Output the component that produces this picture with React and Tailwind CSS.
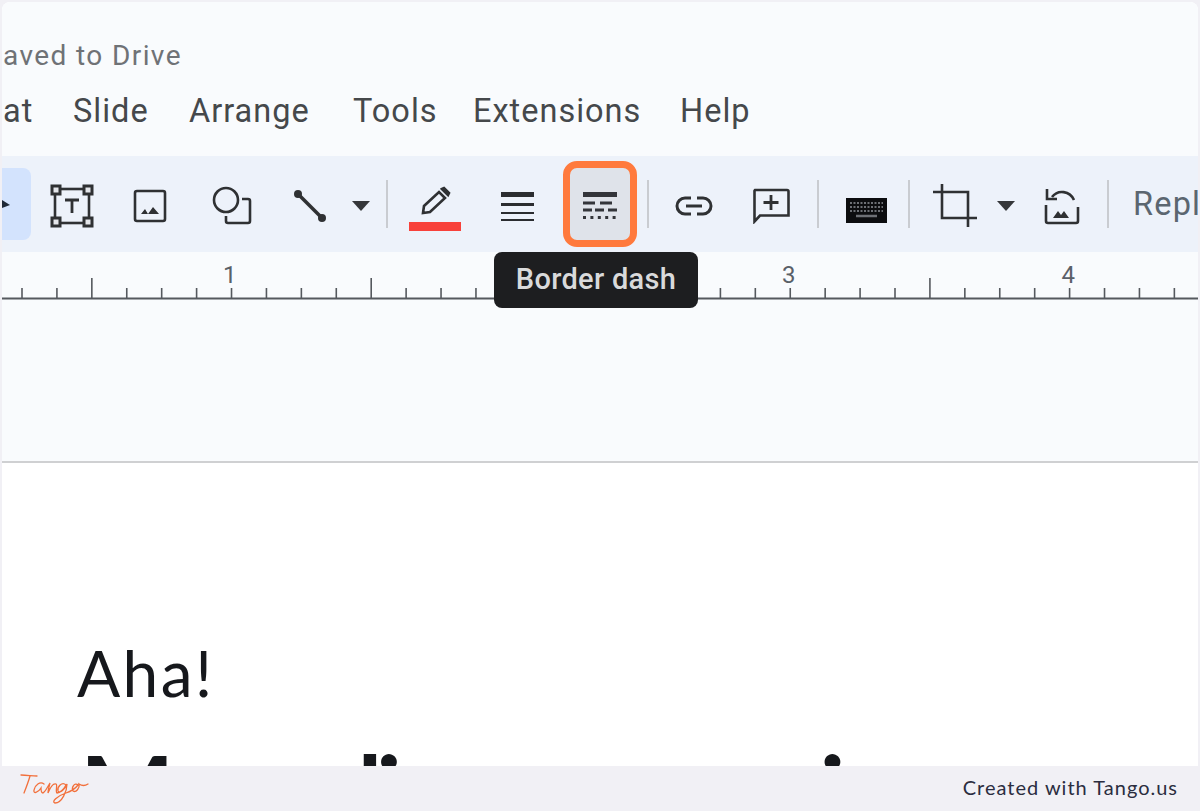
import React from "react";

const menu = [
    { label: "at", width: "w-[70px]" },
    { label: "Slide", width: "w-[116px]" },
    { label: "Arrange", width: "w-[164px]" },
    { label: "Tools", width: "w-[120px]" },
    { label: "Extensions", width: "w-[207px]" },
    { label: "Help", width: "w-auto" },
];

function Icon({ w, h, vb, children }) {
    return (
        <svg width={w} height={h} viewBox={vb} fill="none" stroke="#2f3133" strokeWidth="2.6">
            {children}
        </svg>
    );
}

function Sep({ width = "w-[10px]" }) {
    return (
        <div className={`${width} h-full flex items-center justify-center shrink-0`}>
            <div className="w-[2px] h-[48px] bg-[#c9ccd1]" />
        </div>
    );
}

function Slot({ width, pad = "pt-[4px]", className = "", children }) {
    return <div className={`${width} ${pad} h-full flex items-center shrink-0 ${className}`}>{children}</div>;
}

function Caret() {
    return (
        <svg width="18" height="10" viewBox="0 0 18 10">
            <path d="M0 0h18l-9 10z" fill="#35373a" />
        </svg>
    );
}

function RulerTicks() {
    const ticks = [];
    for (let i = 0; i < 34; i++) {
        const x = 20 + i * 34.92;
        const major = (i - 2) % 8 === 0;
        ticks.push(<line key={i} x1={x} x2={x} y1={major ? 26 : 36} y2={46} />);
    }
    return (
        <svg className="absolute left-0 top-0" width="1200" height="48" stroke="#55595e" strokeWidth="1.6">
            <line x1="0" x2="1198" y1="46.5" y2="46.5" strokeWidth="1.8" />
            {ticks}
        </svg>
    );
}

export default function App() {
    return (
        <div className="w-[1200px] h-[811px] flex flex-col overflow-hidden bg-[#f1f0f5] font-['Roboto',sans-serif]">
            <div className="flex-1 min-h-0 flex flex-col mx-[2px] mt-[2px] rounded-t-lg overflow-hidden bg-white relative">
                {/* Title and menu */}
                <div className="h-[154px] shrink-0 bg-[#f9fbfd]">
                    <div className="pt-[36px] pl-[1px] h-[87px] text-[28px] leading-[36px] tracking-[1.4px] text-[#6f7276]">aved to Drive</div>
                    <div className="flex pl-[1px] text-[32.5px] leading-[44px] tracking-[1px] text-[#45484b]">
                        {menu.map((m) => (
                            <div key={m.label} className={`${m.width} shrink-0`}>{m.label}</div>
                        ))}
                    </div>
                </div>

                {/* Toolbar */}
                <div className="h-[96px] shrink-0 bg-[#edf2fa] flex items-center overflow-hidden">
                    <div className="w-[29px] h-[72px] shrink-0 rounded-r-lg bg-[#d3e3fd] flex items-center">
                        <svg width="8" height="8" viewBox="0 0 8 8"><path d="M0 0l8 5-8 3z" fill="#1f2937" /></svg>
                    </div>
                    <Slot width="w-[82px]" className="justify-center">
                        <Icon w={44} h={44} vb="0 0 44 44">
                            <rect x="5" y="5" width="34" height="34" />
                            <g fill="#e4e6ea" strokeWidth="3">
                                <rect x="2" y="2" width="8" height="8" />
                                <rect x="34" y="2" width="8" height="8" />
                                <rect x="2" y="34" width="8" height="8" />
                                <rect x="34" y="34" width="8" height="8" />
                            </g>
                            <path d="M15 16h14M22 16v13" strokeWidth="2.8" />
                        </Icon>
                    </Slot>
                    <Slot width="w-[74px]" className="justify-center">
                        <Icon w={34} h={34} vb="0 0 34 34">
                            <rect x="2" y="2" width="30" height="30" rx="2" />
                            <path d="M8 25l4-5 3 5zM15 25l5-7 6 7z" fill="#2f3133" stroke="none" />
                        </Icon>
                    </Slot>
                    <Slot width="w-[90px]" className="justify-center">
                        <Icon w={40} h={40} vb="0 0 40 40">
                            <circle cx="14" cy="14" r="12" />
                            <path d="M30 13h6a2 2 0 0 1 2 2v20a2 2 0 0 1-2 2H16a2 2 0 0 1-2-2v-5" />
                        </Icon>
                    </Slot>
                    <Slot width="w-[66px]" className="justify-center">
                        <Icon w={34} h={34} vb="0 0 34 34">
                            <path d="M5 5l24 24" strokeWidth="3.6" />
                            <circle cx="5" cy="5" r="4" fill="#2f3133" stroke="none" />
                            <circle cx="29" cy="29" r="4" fill="#2f3133" stroke="none" />
                        </Icon>
                    </Slot>
                    <Slot width="w-[36px]" className="justify-center"><Caret /></Slot>
                    <Sep width="w-[16px]" />
                    <Slot width="w-[80px]" pad="pt-[9px]" className="flex-col justify-center">
                        <svg width="32" height="30" viewBox="0 0 32 30" fill="none" stroke="#2f3133" strokeWidth="2.6">
                            <path d="M4 27l1-7L20 6l6 6-15 14z" />
                            <path d="M23 3l2-1 5 5-1 2z" fill="#2f3133" />
                        </svg>
                        <div className="w-[52px] h-[9px] mt-[6px] bg-[#f8413a]" />
                    </Slot>
                    <Slot width="w-[84px]" className="flex-col justify-center gap-[7px] pl-[1px]">
                        <div className="w-[33px] h-[5px] bg-[#2b2d30]" />
                        <div className="w-[33px] h-[3px] bg-[#2b2d30] -mt-[1px]" />
                        <div className="w-[33px] h-[2px] bg-[#2b2d30] -mt-[1px]" />
                        <div className="w-[33px] h-[2px] bg-[#2b2d30] -mt-[2px]" />
                    </Slot>
                    <div className="ml-[4px] w-[74px] h-[86px] shrink-0 rounded-[14px] border-[7px] border-[#ff7a3d] bg-[#dfe3ea] flex items-center justify-center">
                        <svg width="36" height="30" viewBox="0 0 36 30" stroke="#33353a" fill="none" className="mt-[4px]">
                            <path d="M1 3.500h34" strokeWidth="5" />
                            <path d="M1 12h12M18 12h12" strokeWidth="3" />
                            <path d="M1 19h9M13 19h9M26 19h9" strokeWidth="3" />
                            <path d="M1 26.500h34" strokeWidth="3.2" strokeDasharray="3 4.4" />
                        </svg>
                    </div>
                    <Sep width="w-[22px]" />
                    <Slot width="w-[70px]" className="justify-center">
                        <svg width="38" height="20" viewBox="0 0 38 20" fill="none" stroke="#2f3133" strokeWidth="3">
                            <path d="M16 2H10a8 8 0 0 0 0 16h6M22 2h6a8 8 0 0 1 0 16h-6M11 10h16" />
                        </svg>
                    </Slot>
                    <Slot width="w-[84px]" className="justify-center">
                        <Icon w={38} h={36} vb="0 0 38 36">
                            <path d="M3 2h32a1.500 1.500 0 0 1 1.500 1.500v24H8l-5.500 6V3.500A1.500 1.500 0 0 1 3 2z" />
                            <path d="M19 7v15M11.500 14.500h15" strokeWidth="2.8" />
                        </Icon>
                    </Slot>
                    <Sep />
                    <Slot width="w-[81px]" pad="pt-0" className="pl-[23px]">
                        <svg width="41" height="25" viewBox="0 0 41 25" className="mt-[12px]">
                            <rect width="41" height="25" fill="#0c0d0f" />
                            <path d="M4 5h33M4 9h33M4 13h33" stroke="#6d7075" strokeWidth="2" strokeDasharray="2 1.500" />
                            <path d="M10 18h21" stroke="#6d7075" strokeWidth="2.500" />
                        </svg>
                    </Slot>
                    <Sep />
                    <Slot width="w-[82px]" className="justify-center">
                        <Icon w={44} h={44} vb="0 0 44 44">
                            <path d="M0 8h35v26" />
                            <path d="M9 0v34h35" />
                            <path d="M35 34v9" />
                        </Icon>
                    </Slot>
                    <Slot width="w-[20px]" className="justify-center"><Caret /></Slot>
                    <Slot width="w-[87px]" className="pl-[28px]">
                        <Icon w={36} h={38} vb="0 0 36 38">
                            <path d="M2 18v16a2 2 0 0 0 2 2h28a2 2 0 0 0 2-2V20" />
                            <path d="M30 13C26 4 14 2 8 10" />
                            <path d="M3 2v10h10" />
                            <path d="M9 31l5-7 3 4 3-4 5 7z" fill="#2f3133" stroke="none" />
                        </Icon>
                    </Slot>
                    <Sep />
                    <div className="ml-[20px] text-[32.5px] leading-[44px] tracking-[1.2px] text-[#5b6670] whitespace-nowrap">Repl</div>
                </div>

                {/* Ruler */}
                <div className="relative h-[48px] shrink-0 bg-[#f9fbfd]">
                    <RulerTicks />
                    <div className="relative flex pl-[88px] pt-[9px] text-[24px] leading-[28px] text-[#5a6068]">
                        {["1", "2", "3", "4"].map((n) => (
                            <div key={n} className="w-[279.500px] shrink-0 text-center">{n}</div>
                        ))}
                    </div>
                </div>

                {/* Canvas above slide */}
                <div className="h-[163px] shrink-0 bg-[#f9fbfd] border-b-2 border-[#cfd0d2]" />

                {/* Slide */}
                <div className="flex-1 min-h-0 overflow-hidden bg-white pl-[75px] pt-[172px] font-['Lato',sans-serif] text-[#16181c]">
                    <div className="text-[64px] leading-[76px] tracking-[2.4px]">Aha!</div>
                    <div className="mt-[23px] ml-[3px] text-[100px] leading-[110px] font-bold tracking-[-6px] whitespace-nowrap">
                        Manuali<span className="ml-[424px]">i</span>
                    </div>
                </div>

                {/* Tooltip */}
                <div className="absolute left-[492px] top-[250px] w-[204px] h-[56px] rounded-lg bg-[#1d1e20] flex items-center justify-center text-[29px] font-medium tracking-[0.3px] text-[#d9dadb]">
                    Border dash
                </div>
            </div>

            {/* Footer */}
            <div className="h-[45px] shrink-0 flex items-center justify-between pl-[20px] pr-[22px]">
                <svg width="70" height="34" viewBox="20 9 70 34" fill="none" stroke="#f2703c" strokeWidth="1.3" strokeLinecap="round">
                    <path d="M21 12C27 12 32 13 37 13" />
                    <path d="M30 13C28 20 26 25 24 30" />
                    <path d="M44 21C40 18 35 22 34 27C33 31 38 30 41 25C41 28 41 30 43 30C46 28 48 23 50 20C49 24 48 27 48 30C50 25 53 20 56 21C58 22 55 28 57 30C60 30 64 26 66 22C62 18 57 24 58 28C60 31 65 26 67 21C67 28 62 40 55 40C51 39 57 33 66 30C72 28 75 26 78 22C75 19 71 24 73 28C76 30 80 25 79 21C82 23 85 23 88 21" />
                </svg>
                <div className="-mt-[3px] font-['Lato',sans-serif] text-[20px] tracking-[1px] text-[#2b2d3f]">Created with Tango.us</div>
            </div>
        </div>
    );
}
